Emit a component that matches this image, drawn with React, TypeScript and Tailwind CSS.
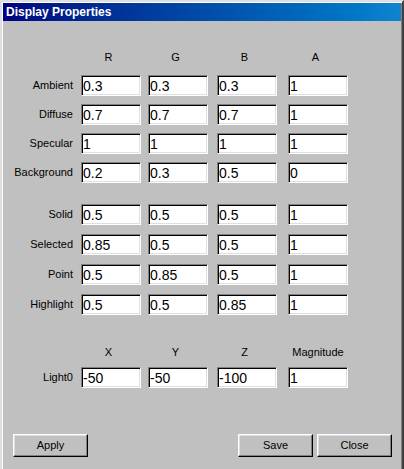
import React from 'react'

const font = { fontFamily: '"Liberation Sans", Arial, sans-serif' }

const colorRows = [
  { label: 'Ambient', values: ['0.3', '0.3', '0.3', '1'] },
  { label: 'Diffuse', values: ['0.7', '0.7', '0.7', '1'] },
  { label: 'Specular', values: ['1', '1', '1', '1'] },
  { label: 'Background', values: ['0.2', '0.3', '0.5', '0'] },
]

const objectRows = [
  { label: 'Solid', values: ['0.5', '0.5', '0.5', '1'] },
  { label: 'Selected', values: ['0.85', '0.5', '0.5', '1'] },
  { label: 'Point', values: ['0.5', '0.85', '0.5', '1'] },
  { label: 'Highlight', values: ['0.5', '0.5', '0.85', '1'] },
]

// left margin before each of the 4 columns
const colMargins = ['ml-[8px]', 'ml-[7px]', 'ml-[9px]', 'ml-[11px]']

function Field({ value, className }: { value: string; className: string }) {
  return (
    <input
      defaultValue={value}
      className={`${className} h-[21px] w-[60px] border border-t-[#808080] border-l-[#808080] border-b-white border-r-white bg-white pl-[1px] text-[14px] leading-[19px] text-black outline-none shadow-[inset_1px_1px_0_#000,inset_-1px_-1px_0_#dfdfdf]`}
      style={font}
    />
  )
}

function Row({ label, values }: { label: string; values: string[] }) {
  return (
    <div className="flex items-center">
      <span className="w-[70px] text-right text-[11px]">{label}</span>
      {values.map((v, i) => (
        <Field key={i} value={v} className={colMargins[i]} />
      ))}
    </div>
  )
}

function Header({ labels }: { labels: string[] }) {
  return (
    <div className="flex h-[14px] items-center text-[11px] leading-[14px]">
      <span className="w-[70px]" />
      {labels.map((l, i) => (
        <span key={l} className={`${colMargins[i]} w-[60px] text-center ${l.length > 1 ? '' : 'pr-[5px]'}`}>
          {l}
        </span>
      ))}
    </div>
  )
}

function Button({ children, className }: { children: React.ReactNode; className: string }) {
  return (
    <button
      className={`${className} h-[23px] w-[75px] border border-t-white border-l-white border-b-black border-r-black bg-[#c0c0c0] text-[11px] text-black shadow-[inset_-1px_-1px_0_#808080,inset_1px_1px_0_#dfdfdf]`}
      style={font}
    >
      {children}
    </button>
  )
}

export default function App() {
  return (
    <div className="h-[469px] w-[404px] overflow-hidden bg-[#c0c0c0]" style={font}>
      {/* window runs past the bottom of the shot, so no bottom edge */}
      <div className="flex h-[480px] w-[404px] flex-col border-2 border-t-[#dfdfdf] border-l-[#dfdfdf] border-b-[#404040] border-r-[#404040] p-[1px] shadow-[inset_1px_1px_0_#fff,inset_-1px_-1px_0_#808080]">
        <div className="flex h-[18px] items-center bg-gradient-to-r from-[#000080] to-[#1084d0] pl-[3px]">
          <span className="text-[12px] font-bold text-white">Display Properties</span>
        </div>

        <div className="mt-[29px]">
          <Header labels={['R', 'G', 'B', 'A']} />
        </div>

        <div className="mt-[11px] flex flex-col gap-[8px]">
          {colorRows.map((r) => (
            <Row key={r.label} {...r} />
          ))}
        </div>

        <div className="mt-[21px] flex flex-col gap-[9px]">
          {objectRows.map((r) => (
            <Row key={r.label} {...r} />
          ))}
        </div>

        <div className="mt-[30px]">
          <Header labels={['X', 'Y', 'Z', 'Magnitude']} />
        </div>
        <div className="mt-[8px]">
          <Row label="Light0" values={['-50', '-50', '-100', '1']} />
        </div>

        <div className="mt-[46px] flex">
          <Button className="ml-[10px]">Apply</Button>
          <Button className="ml-auto">Save</Button>
          <Button className="ml-[4px] mr-[9px]">Close</Button>
        </div>
      </div>
    </div>
  )
}
